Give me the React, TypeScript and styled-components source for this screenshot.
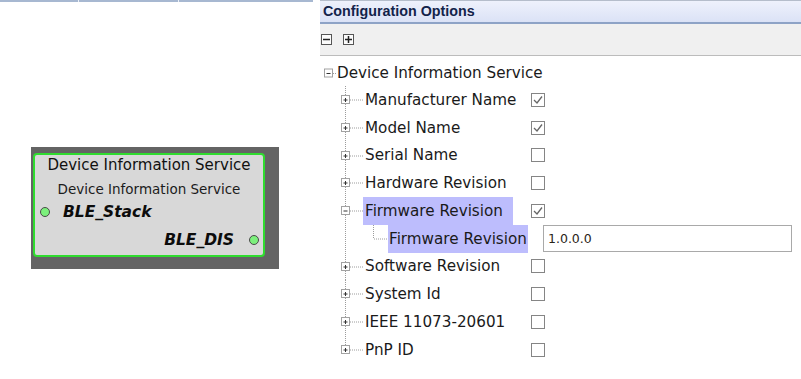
import React from "react";
import styled, { createGlobalStyle } from "styled-components";

const GlobalStyle = createGlobalStyle`
  html, body {
    margin: 0;
    padding: 0;
    background: #ffffff;
  }
  body {
    width: 801px;
    height: 379px;
    overflow: hidden;
    font-family: "DejaVu Sans", Verdana, sans-serif;
  }
`;

const Screen = styled.div`
  display: flex;
  width: 801px;
  height: 379px;
`;

/* left side: diagram canvas */

const LeftPane = styled.div`
  display: flex;
  flex-direction: column;
  width: 320px;
`;

const TableEdge = styled.div`
  display: flex;
  width: 313px;
  height: 2px;
  background: #a7b8d1;
`;

const EdgeCell = styled.div<{ $w: number }>`
  width: ${({ $w }) => $w}px;
  height: 2px;
  border-right: 1px solid #eef2f8;
`;

const Canvas = styled.div`
  display: flex;
  margin: 145px 0 0 31px;
  width: 248px;
  height: 122px;
  padding: 6px 0 0 2px;
  box-sizing: border-box;
  background: #646464;
`;

const Node = styled.div`
  display: flex;
  flex-direction: column;
  width: 232px;
  height: 104px;
  box-sizing: border-box;
  border: 2px solid #2fdc2f;
  border-radius: 4px;
  background: #d8d8d8;
  color: #111;
`;

const NodeTitle = styled.div`
  height: 20px;
  line-height: 20px;
  text-align: center;
  font-size: 15px;
`;

const NodeSubtitle = styled.div`
  margin-top: 4px;
  height: 20px;
  line-height: 20px;
  text-align: center;
  font-size: 13.5px;
  color: #1c1c1c;
`;

const PortRow = styled.div<{ $out?: boolean }>`
  display: flex;
  align-items: center;
  justify-content: ${({ $out }) => ($out ? "flex-end" : "flex-start")};
  gap: ${({ $out }) => ($out ? "15px" : "13px")};
  height: 20px;
  margin-top: ${({ $out }) => ($out ? "8px" : "3px")};
  padding: ${({ $out }) => ($out ? "0 4px 0 0" : "0 0 0 5px")};
  font-size: 15.5px;
  font-weight: bold;
  font-style: italic;
  color: #0c0c0c;
`;

const PortDot = styled.span`
  width: 8px;
  height: 8px;
  border: 1px solid #4a4a4a;
  border-radius: 50%;
  background: #7cf07c;
`;

/* right side: configuration options */

const RightPane = styled.div`
  display: flex;
  flex-direction: column;
  flex: 1;
`;

const Header = styled.div`
  height: 24px;
  box-sizing: border-box;
  padding-left: 3px;
  border-top: 1px solid #b5bdcb;
  border-bottom: 2px solid #8ea3c6;
  background: linear-gradient(#eef1fc, #dbe2f6);
  font-family: "Liberation Sans", Arial, sans-serif;
  font-weight: bold;
  font-size: 14.3px;
  line-height: 21px;
  color: #13234a;
`;

const Toolbar = styled.div`
  display: flex;
  align-items: center;
  gap: 11px;
  height: 32px;
  box-sizing: border-box;
  padding: 0 0 1px 1px;
  border-bottom: 1px solid #bcbcbc;
  background: #f0f0f0;
`;

const ToolButton = styled.span`
  display: flex;
  align-items: center;
  justify-content: center;
  width: 11px;
  height: 11px;
  box-sizing: border-box;
  border: 1px solid #555;
  background: #fbfbfb;
`;

const Tree = styled.div`
  display: flex;
  flex-direction: column;
  padding-top: 4px;
  font-size: 15.2px;
  color: #1a1a1a;
`;

const RootRow = styled.div`
  display: flex;
  align-items: center;
  height: 26px;
`;

const Row = styled.div`
  display: flex;
  align-items: center;
  height: 27.75px;
`;

const LabelCell = styled.div<{ $w: number }>`
  display: flex;
  width: ${({ $w }) => $w}px;
  height: 100%;
`;

const Label = styled.span<{ $selected?: boolean; $tight?: boolean }>`
  display: flex;
  align-items: center;
  height: 100%;
  padding: ${({ $tight }) => ($tight ? "0 1px" : "0 10px 0 2px")};
  background: ${({ $selected }) => ($selected ? "#bdbdfd" : "transparent")};
  white-space: nowrap;
`;

const CheckBox = styled.span`
  display: flex;
  width: 14px;
  height: 14px;
  box-sizing: border-box;
  border: 1px solid #858585;
  background: #fff;
`;

const ValueInput = styled.input`
  width: 249px;
  height: 27px;
  box-sizing: border-box;
  margin: 0;
  padding: 0 4px;
  border: 1px solid #a9a9a9;
  font-family: "DejaVu Sans", Verdana, sans-serif;
  font-size: 12.5px;
  color: #2a2418;
  outline: none;
`;

const DOT = "#9c9c9c";

const Expander: React.FC<{ x: number; cy: number; open?: boolean }> = ({ x, cy, open }) => (
  <g>
    <rect x={x + 0.5} y={cy - 4} width={8} height={8} fill="#fff" stroke="#a2a2a2" />
    <line x1={x + 2.5} x2={x + 6.5} y1={cy + 0.5} y2={cy + 0.5} stroke="#333" />
    {!open && <line x1={x + 4.5} x2={x + 4.5} y1={cy - 1.5} y2={cy + 2.5} stroke="#333" />}
  </g>
);

const H = 27.75;
const CY = 13.5;

const ChildGlyph: React.FC<{ open?: boolean; last?: boolean }> = ({ open, last }) => (
  <svg width={43} height={H} style={{ display: "block", flex: "none" }}>
    <line x1={25.5} x2={25.5} y1={0} y2={last ? CY : H} stroke={DOT} strokeDasharray="1 1" />
    <line x1={30} x2={43} y1={CY + 0.5} y2={CY + 0.5} stroke={DOT} strokeDasharray="1 1" />
    <Expander x={21} cy={CY} open={open} />
  </svg>
);

const LeafGlyph: React.FC = () => (
  <svg width={68} height={H} style={{ display: "block", flex: "none" }}>
    <line x1={25.5} x2={25.5} y1={0} y2={H} stroke={DOT} strokeDasharray="1 1" />
    <line x1={53.5} x2={53.5} y1={0} y2={CY} stroke={DOT} strokeDasharray="1 1" />
    <line x1={54} x2={68} y1={CY + 0.5} y2={CY + 0.5} stroke={DOT} strokeDasharray="1 1" />
  </svg>
);

const RootGlyph: React.FC = () => (
  <svg width={17} height={26} style={{ display: "block", flex: "none" }}>
    <line x1={13} x2={17} y1={13.5} y2={13.5} stroke={DOT} strokeDasharray="1 1" />
    <Expander x={4} cy={13} open />
  </svg>
);

const Check: React.FC<{ on: boolean }> = ({ on }) => (
  <CheckBox>
    {on && (
      <svg width={12} height={12} viewBox="0 0 12 12">
        <polyline points="2,6 5,9 10,2.5" fill="none" stroke="#666" strokeWidth={1.3} />
      </svg>
    )}
  </CheckBox>
);

type Option = { name: string; checked: boolean; open?: boolean };

const options: Option[] = [
  { name: "Manufacturer Name", checked: true },
  { name: "Model Name", checked: true },
  { name: "Serial Name", checked: false },
  { name: "Hardware Revision", checked: false },
  { name: "Firmware Revision", checked: true, open: true },
  { name: "Software Revision", checked: false },
  { name: "System Id", checked: false },
  { name: "IEEE 11073-20601", checked: false },
  { name: "PnP ID", checked: false },
];

const App: React.FC = () => {
  return (
    <>
      <GlobalStyle />
      <Screen>
        <LeftPane>
          <TableEdge>
            <EdgeCell $w={78} />
            <EdgeCell $w={99} />
          </TableEdge>
          <Canvas>
            <Node>
              <NodeTitle>Device Information Service</NodeTitle>
              <NodeSubtitle>Device Information Service</NodeSubtitle>
              <PortRow>
                <PortDot />
                BLE_Stack
              </PortRow>
              <PortRow $out>
                BLE_DIS
                <PortDot />
              </PortRow>
            </Node>
          </Canvas>
        </LeftPane>

        <RightPane>
          <Header>Configuration Options</Header>
          <Toolbar>
            <ToolButton>
              <svg width={9} height={9}>
                <line x1={1} x2={8} y1={4.5} y2={4.5} stroke="#222" strokeWidth={1.5} />
              </svg>
            </ToolButton>
            <ToolButton>
              <svg width={9} height={9}>
                <line x1={1} x2={8} y1={4.5} y2={4.5} stroke="#222" strokeWidth={1.5} />
                <line x1={4.5} x2={4.5} y1={1} y2={8} stroke="#222" strokeWidth={1.5} />
              </svg>
            </ToolButton>
          </Toolbar>
          <Tree>
            <RootRow>
              <RootGlyph />
              Device Information Service
            </RootRow>
            {options.map((opt, i) => (
              <React.Fragment key={opt.name}>
                <Row>
                  <ChildGlyph open={opt.open} last={i === options.length - 1} />
                  <LabelCell $w={168}>
                    <Label $selected={opt.open}>{opt.name}</Label>
                  </LabelCell>
                  <Check on={opt.checked} />
                </Row>
                {opt.open && (
                  <Row>
                    <LeafGlyph />
                    <LabelCell $w={155}>
                      <Label $selected $tight>
                        {opt.name}
                      </Label>
                    </LabelCell>
                    <ValueInput defaultValue="1.0.0.0" />
                  </Row>
                )}
              </React.Fragment>
            ))}
          </Tree>
        </RightPane>
      </Screen>
    </>
  );
};

export default App;
